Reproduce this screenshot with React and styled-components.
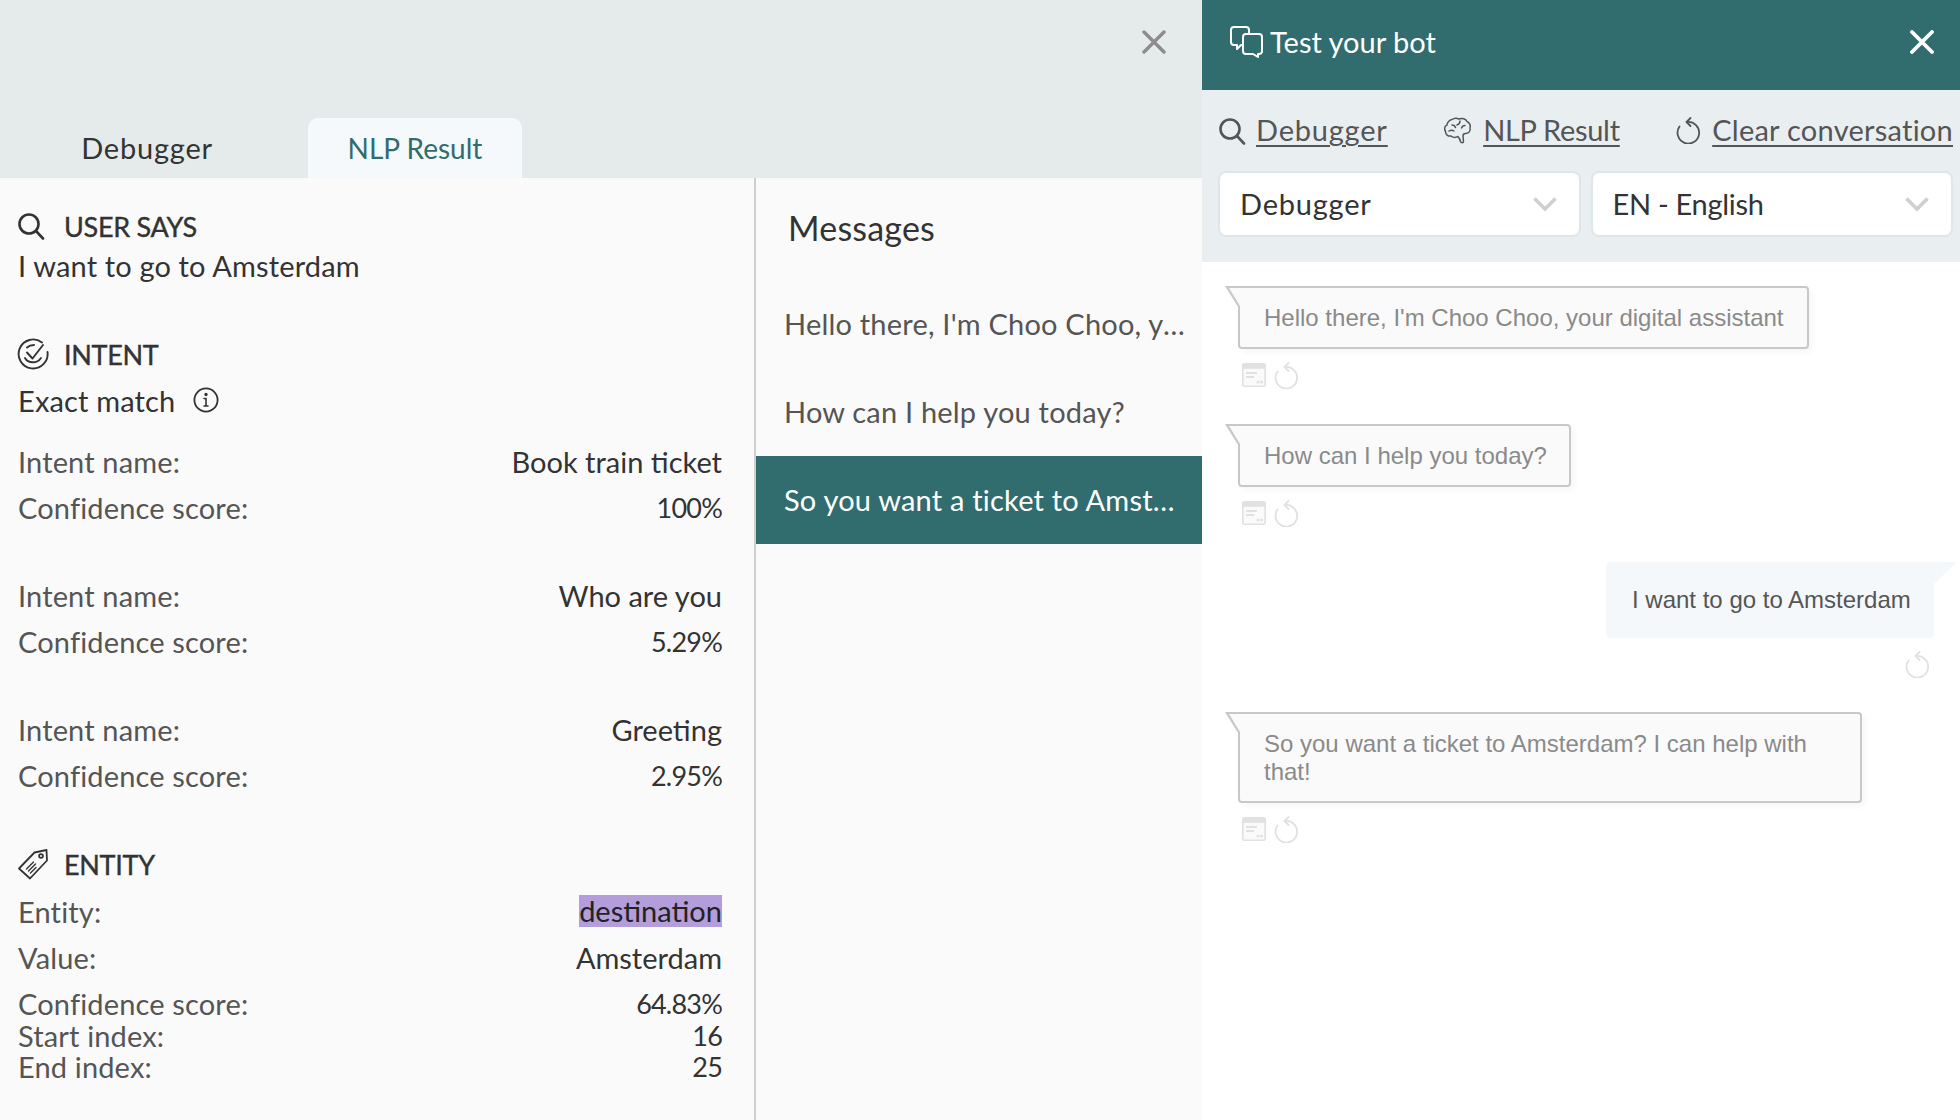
import React from 'react';
import styled, {createGlobalStyle} from 'styled-components';

const TEAL = '#316d6e';
const BODY_FONT = '"Lato", "Noto Sans", sans-serif';

const GlobalStyle = createGlobalStyle`
  html, body {
    margin: 0;
    padding: 0;
    width: 1960px;
    height: 1120px;
    overflow: hidden;
    background: #fff;
    font-family: ${BODY_FONT};
  }
  * { box-sizing: border-box; }
`;

const SearchIcon = ({size = 28, color = '#333'}) => (
  <svg width={size} height={size} viewBox="0 0 28 28" fill="none" stroke={color} strokeWidth="2.6" strokeLinecap="round">
    <circle cx="12" cy="12" r="9.5" />
    <path d="M19 19l7 7.5" />
  </svg>
);

const IntentIcon = () => (
  <svg width="32" height="32" viewBox="0 0 32 32" fill="none" stroke="#333" strokeWidth="1.9" strokeLinecap="round" strokeLinejoin="round">
    <path d="M25 4.500A14.500 14.500 0 1 0 30.500 14" />
    <path d="M10 14.500l5.500 6L26 7" />
    <path d="M8 20c3 5.500 12 6 16 0" />
    <path d="M10 9.500c2-1.800 4-2.500 7-2.500" />
  </svg>
);

const InfoIcon = () => (
  <svg width="26" height="26" viewBox="0 0 26 26" fill="none" stroke="#333" strokeWidth="1.8" strokeLinecap="round">
    <circle cx="13" cy="13" r="11.6" />
    <path d="M13 11.500v7.500M11 11.500h2M11 19h4" strokeWidth="1.600" />
    <circle cx="13" cy="7.500" r="0.8" fill="#333" />
  </svg>
);

const TagIcon = () => (
  <svg width="32" height="32" viewBox="0 0 32 32" fill="none" stroke="#333" strokeWidth="1.8" strokeLinecap="round" strokeLinejoin="round">
    <path d="M2 20.500L17.500 4.500L29.500 2L30 12.500L13 30.500Z" />
    <circle cx="24" cy="8" r="1.900" />
    <path d="M9.500 21l7-7M11.500 23l7-7M13.500 25l5.500-5.500" strokeWidth="1.400" />
  </svg>
);

const ChatIcon = () => (
  <svg width="34" height="34" viewBox="0 0 34 34" fill="none" stroke="#fff" strokeWidth="2" strokeLinejoin="round">
    <path d="M12 20H11l-4 4v-4H4a3 3 0 0 1-3-3V5a3 3 0 0 1 3-3h12a3 3 0 0 1 3 3v4" />
    <path d="M16 9h13a3 3 0 0 1 3 3v14a3 3 0 0 1-3 3h-1v3l-5-3H16a3 3 0 0 1-3-3V12a3 3 0 0 1 3-3z" />
  </svg>
);

const BrainIcon = () => (
  <svg width="30" height="30" viewBox="0 0 30 30" fill="none" stroke="#555" strokeWidth="1.500" strokeLinecap="round" strokeLinejoin="round">
    <path d="M9 3.500C11 2 14 2 16 3c3-1.500 7 0 8 2.500 2.500 1 4 4 3 6.500 1 3-1.500 5.500-4.500 5.500-1.500 0-2.500 1-2.500 2.500l.5 5.500c0 1.500-2.500 1.500-3 0-.5-2-1-4-3-5-2 1.500-5 1-6.500-.5-3 .5-5.500-1.500-5.500-4.500C1 13 1.500 10 4 9c0-2.500 2.500-5 5-5.500z" />
    <path d="M9 9c2 0 3 1 3.500 2.500M17 5c0 2-1 3.500-3 4M22 9.500c-1.500 0-3 1-3.500 2.500M6 15c1.500-1 3.500-1 5 0" />
  </svg>
);

const ResetIcon = ({size = 27, color = '#555', weight = 1.8}) => (
  <svg width={size} height={size} viewBox="0 0 27 27" fill="none" stroke={color} strokeWidth={weight} strokeLinecap="round" strokeLinejoin="round">
    <path d="M12 5A10.800 10.800 0 1 1 4.500 9.500" />
    <path d="M15.500 1L11.500 5L15.500 9" />
  </svg>
);

const DocIcon = () => (
  <svg width="24" height="24" viewBox="0 0 24 24">
    <rect x="0.800" y="0.800" width="22.400" height="22.400" rx="2" fill="#fafafa" stroke="#e1e1e1" strokeWidth="1.600" />
    <rect x="0.800" y="0.800" width="22.400" height="5" fill="#e1e1e1" />
    <path d="M4 10h11M4 14h8" stroke="#e1e1e1" strokeWidth="1.800" fill="none" />
    <circle cx="16" cy="19" r="1.500" fill="#e1e1e1" />
    <circle cx="19.500" cy="19" r="1.500" fill="#e1e1e1" />
  </svg>
);

const CloseIcon = ({color, weight}) => (
  <svg width="24" height="24" viewBox="0 0 24 24" fill="none" stroke={color} strokeWidth={weight} strokeLinecap="round">
    <path d="M2 2l20 20M22 2L2 22" />
  </svg>
);

const ChevronIcon = () => (
  <svg width="24" height="14" viewBox="0 0 24 14" fill="none" stroke="#cfcfcf" strokeWidth="3.600">
    <path d="M1.500 1.500L12 12L22.500 1.500" />
  </svg>
);

const Page = styled.div`
  display: grid;
  grid-template-columns: 1202px 758px;
  width: 1960px;
  height: 1120px;
`;

const Inspector = styled.div`
  display: flex;
  flex-direction: column;
  height: 1120px;
  background: #fafafa;
`;

const InspectorHead = styled.div`
  display: flex;
  flex-direction: column;
  justify-content: space-between;
  height: 178px;
  background: #e5ebea;
`;

const CloseRow = styled.div`
  display: flex;
  justify-content: flex-end;
  padding: 30px 36px 0 0;
`;

const Tabs = styled.div`
  display: flex;
  gap: 54px;
  padding-left: 40px;
`;

const Tab = styled.div`
  display: flex;
  align-items: center;
  justify-content: center;
  width: 214px;
  height: 60px;
  padding-bottom: ${({$active}) => ($active ? 0 : 2)}px;
  font-size: ${({$active}) => ($active ? 28 : 29)}px;
  letter-spacing: ${({$active}) => ($active ? 0 : 0.8)}px;
  color: ${({$active}) => ($active ? TEAL : '#333')};
  background: ${({$active}) => ($active ? '#f5f9fc' : 'transparent')};
  border-radius: 10px 10px 0 0;
`;

const InspectorBody = styled.div`
  display: grid;
  grid-template-columns: 756px 446px;
  flex: 1;
`;

const ResultPane = styled.div`
  padding: 28px 32px 0 18px;
  border-right: 2px solid #cfcfcf;
`;

const SectionTitle = styled.div`
  display: flex;
  align-items: center;
  height: 40px;
  margin-top: ${({$top}) => $top || 0}px;
  font-size: 27px;
  letter-spacing: -0.3px;
  -webkit-text-stroke: 0.4px #333;
  color: #333;
`;

const TitleIcon = styled.span`
  display: flex;
  width: 47px;
  margin-left: -1px;
`;

const PlainLine = styled.div`
  display: flex;
  align-items: center;
  gap: 18px;
  height: ${({$height}) => $height}px;
  padding-bottom: 4px;
  margin-top: ${({$top}) => $top || 0}px;
  font-size: 29px;
  letter-spacing: 0.15px;
  color: #333;
`;

const ResultRow = styled.div`
  display: flex;
  align-items: center;
  justify-content: space-between;
  height: ${({$tight}) => ($tight ? 31.5 : 46)}px;
  padding-bottom: 2px;
  margin-top: ${({$top}) => $top || 0}px;
  font-size: 29px;
  line-height: 29px;
`;

const RowLabel = styled.span`
  color: #555;
  letter-spacing: 0.15px;
`;

const RowValue = styled.span`
  color: #333;
  ${({$numeric}) => $numeric && `
    font-size: 27px;
    letter-spacing: -0.8px;
  `}
`;

const EntityChip = styled.span`
  background: #b39ddb;
  color: #222;
  line-height: 32px;
`;

const MessagesPane = styled.div`
  display: flex;
  flex-direction: column;
`;

const MessagesTitle = styled.div`
  padding: 28px 0 0 32px;
  height: 102px;
  font-size: 34px;
  line-height: 44px;
  letter-spacing: 0.2px;
  color: #333;
`;

const MessageItem = styled.div`
  height: 88px;
  padding: 0 14px 0 28px;
  line-height: 88px;
  font-size: 29px;
  letter-spacing: 0.2px;
  color: ${({$active}) => ($active ? '#fff' : '#555')};
  background: ${({$active}) => ($active ? TEAL : 'transparent')};
  white-space: nowrap;
  overflow: hidden;
  text-overflow: ellipsis;
`;

const TestBot = styled.div`
  display: flex;
  flex-direction: column;
  height: 1120px;
  background: #fff;
`;

const BotHeader = styled.div`
  display: flex;
  align-items: center;
  height: 90px;
  padding: 0 26px 6px 28px;
  background: ${TEAL};
  color: #fff;
  font-size: 29px;
`;

const BotTitle = styled.span`
  flex: 1;
  margin-left: 6px;
  padding-bottom: 2px;
`;

const BotTools = styled.div`
  display: flex;
  flex-direction: column;
  height: 172px;
  padding: 0 7px 0 16px;
  background: #e9eff0;
`;

const LinkRow = styled.div`
  display: flex;
  justify-content: space-between;
  align-items: center;
  height: 81px;
`;

const ToolLink = styled.span`
  display: flex;
  align-items: center;
  gap: 10px;
  font-size: 29px;
  letter-spacing: ${({$spread}) => $spread}px;
  color: #555;
`;

const LinkText = styled.span`
  padding-bottom: 2px;
  text-decoration: underline;
  text-decoration-thickness: 2px;
  text-underline-offset: 4px;
`;

const SelectRow = styled.div`
  display: grid;
  grid-template-columns: 1fr 1fr;
  gap: 10px;
`;

const SelectBox = styled.div`
  display: flex;
  align-items: center;
  justify-content: space-between;
  height: 66px;
  padding: 0 22px 0 20px;
  background: #fff;
  border: 2px solid #dfe6ea;
  border-radius: 8px;
  font-size: 29px;
  color: #333;
`;

const SelectValue = styled.span`
  padding-bottom: 2px;
  letter-spacing: ${({$spread}) => $spread || 0}px;
`;

const Chat = styled.div`
  display: flex;
  flex-direction: column;
  padding: 24px 26px 0 36px;
`;

const BotBubble = styled.div`
  position: relative;
  align-self: flex-start;
  width: ${({$width}) => $width}px;
  padding: 16px 20px 15px 24px;
  margin-top: ${({$top}) => $top || 0}px;
  background: #fafafa;
  border: 2px solid #c8c8c8;
  border-radius: 0 4px 4px 4px;
  box-shadow: 3px 3px 6px rgba(0, 0, 0, 0.04);
  font-family: "Liberation Sans", Arial, sans-serif;
  font-size: 24px;
  line-height: 28px;
  color: #8a8a8a;

  &::before {
    content: '';
    position: absolute;
    left: -15px;
    top: -2px;
    width: 15px;
    height: 24px;
    background: #c8c8c8;
    clip-path: polygon(0 0, 100% 0, 100% 100%);
  }
  &::after {
    content: '';
    position: absolute;
    left: -11px;
    top: 0;
    width: 11px;
    height: 18px;
    background: #fafafa;
    clip-path: polygon(0 0, 100% 0, 100% 100%);
  }
`;

const UserBubble = styled.div`
  position: relative;
  align-self: flex-end;
  width: 328px;
  height: 76px;
  padding-left: 26px;
  margin-top: 36px;
  background: #f4f8fb;
  border-radius: 4px 0 4px 4px;
  font-family: "Liberation Sans", Arial, sans-serif;
  font-size: 24px;
  line-height: 76px;
  white-space: nowrap;
  color: #555;

  &::after {
    content: '';
    position: absolute;
    right: -23px;
    top: 0;
    width: 23px;
    height: 22px;
    background: #f4f8fb;
    clip-path: polygon(0 0, 100% 0, 0 100%);
  }
`;

const BubbleActions = styled.div`
  display: flex;
  align-items: center;
  justify-content: ${({$right}) => ($right ? 'flex-end' : 'flex-start')};
  gap: 7px;
  height: 26px;
  margin-top: 13px;
  padding-left: ${({$right}) => ($right ? 0 : 4)}px;
  padding-right: ${({$right}) => ($right ? 3 : 0)}px;
`;

const App = () => (
  <Page>
    <GlobalStyle />
    <Inspector>
      <InspectorHead>
        <CloseRow>
          <CloseIcon color="#8c8c8c" weight={3.4} />
        </CloseRow>
        <Tabs>
          <Tab>Debugger</Tab>
          <Tab $active>NLP Result</Tab>
        </Tabs>
      </InspectorHead>
      <InspectorBody>
        <ResultPane>
          <SectionTitle>
            <TitleIcon><SearchIcon /></TitleIcon>
            USER SAYS
          </SectionTitle>
          <PlainLine $height={42}>I want to go to Amsterdam</PlainLine>

          <SectionTitle $top={46}>
            <TitleIcon><IntentIcon /></TitleIcon>
            INTENT
          </SectionTitle>
          <PlainLine $height={46} $top={5}>Exact match <InfoIcon /></PlainLine>

          <ResultRow $top={14}><RowLabel>Intent name:</RowLabel><RowValue>Book train ticket</RowValue></ResultRow>
          <ResultRow><RowLabel>Confidence score:</RowLabel><RowValue $numeric>100%</RowValue></ResultRow>

          <ResultRow $top={42}><RowLabel>Intent name:</RowLabel><RowValue>Who are you</RowValue></ResultRow>
          <ResultRow><RowLabel>Confidence score:</RowLabel><RowValue $numeric>5.29%</RowValue></ResultRow>

          <ResultRow $top={42}><RowLabel>Intent name:</RowLabel><RowValue>Greeting</RowValue></ResultRow>
          <ResultRow><RowLabel>Confidence score:</RowLabel><RowValue $numeric>2.95%</RowValue></ResultRow>

          <SectionTitle $top={45}>
            <TitleIcon><TagIcon /></TitleIcon>
            ENTITY
          </SectionTitle>
          <ResultRow $top={5}><RowLabel>Entity:</RowLabel><EntityChip>destination</EntityChip></ResultRow>
          <ResultRow><RowLabel>Value:</RowLabel><RowValue>Amsterdam</RowValue></ResultRow>
          <ResultRow $tight $top={8}><RowLabel>Confidence score:</RowLabel><RowValue $numeric>64.83%</RowValue></ResultRow>
          <ResultRow $tight><RowLabel>Start index:</RowLabel><RowValue $numeric>16</RowValue></ResultRow>
          <ResultRow $tight><RowLabel>End index:</RowLabel><RowValue $numeric>25</RowValue></ResultRow>
        </ResultPane>

        <MessagesPane>
          <MessagesTitle>Messages</MessagesTitle>
          <MessageItem>Hello there, I'm Choo Choo, your digital assistant</MessageItem>
          <MessageItem>How can I help you today?</MessageItem>
          <MessageItem $active>So you want a ticket to Amsterdam? I can help with that!</MessageItem>
        </MessagesPane>
      </InspectorBody>
    </Inspector>

    <TestBot>
      <BotHeader>
        <ChatIcon />
        <BotTitle>Test your bot</BotTitle>
        <CloseIcon color="#fff" weight={3.8} />
      </BotHeader>
      <BotTools>
        <LinkRow>
          <ToolLink $spread={0.8}><SearchIcon color="#555" /><LinkText>Debugger</LinkText></ToolLink>
          <ToolLink $spread={-0.3}><BrainIcon /><LinkText>NLP Result</LinkText></ToolLink>
          <ToolLink $spread={0.25}><ResetIcon /><LinkText>Clear conversation</LinkText></ToolLink>
        </LinkRow>
        <SelectRow>
          <SelectBox><SelectValue $spread={0.8}>Debugger</SelectValue> <ChevronIcon /></SelectBox>
          <SelectBox><SelectValue $spread={-0.3}>EN - English</SelectValue> <ChevronIcon /></SelectBox>
        </SelectRow>
      </BotTools>
      <Chat>
        <BotBubble $width={571}>Hello there, I'm Choo Choo, your digital assistant</BotBubble>
        <BubbleActions><DocIcon /><ResetIcon color="#e1e1e1" /></BubbleActions>

        <BotBubble $width={333} $top={36}>How can I help you today?</BotBubble>
        <BubbleActions><DocIcon /><ResetIcon color="#e1e1e1" /></BubbleActions>

        <UserBubble>I want to go to Amsterdam</UserBubble>
        <BubbleActions $right><ResetIcon color="#e1e1e1" /></BubbleActions>

        <BotBubble $width={624} $top={35}>So you want a ticket to Amsterdam? I can help with that!</BotBubble>
        <BubbleActions><DocIcon /><ResetIcon color="#e1e1e1" /></BubbleActions>
      </Chat>
    </TestBot>
  </Page>
);

export default App;
